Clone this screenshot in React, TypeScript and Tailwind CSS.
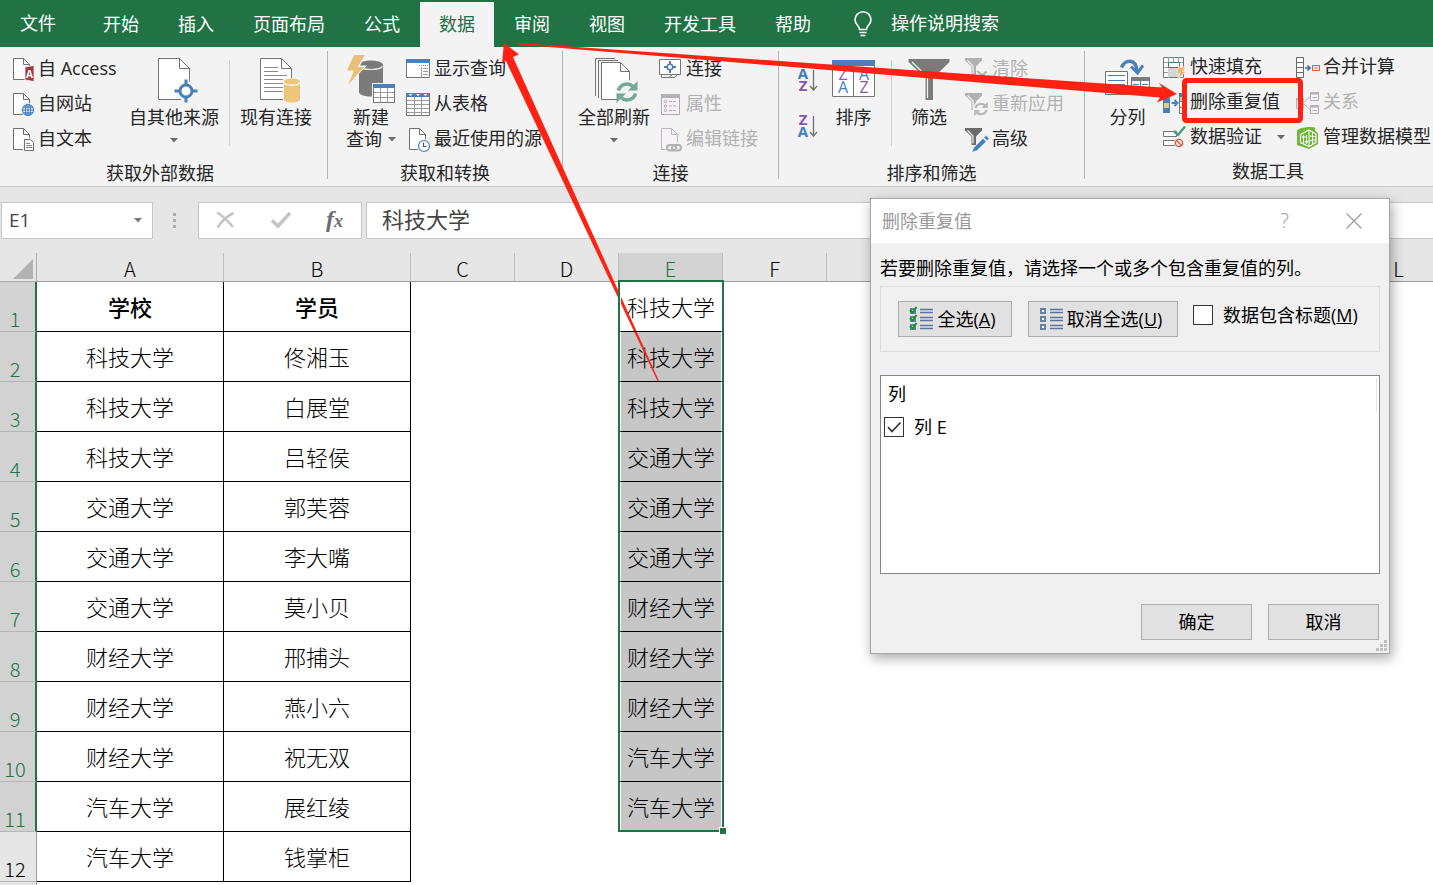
import React, { useState } from "react"
import clsx from "clsx"

const RIBBON_TABS = ["开始", "插入", "页面布局", "公式", "数据", "审阅", "视图", "开发工具", "帮助"]

// G to K sit under the dialog and stay unlabelled
const COLUMNS = ["A", "B", "C", "D", "E", "F", "", "", "", "", "", "L"]

const ROWS = [
  { school: "学校", student: "学员", unique: "科技大学" },
  { school: "科技大学", student: "佟湘玉", unique: "科技大学" },
  { school: "科技大学", student: "白展堂", unique: "科技大学" },
  { school: "科技大学", student: "吕轻侯", unique: "交通大学" },
  { school: "交通大学", student: "郭芙蓉", unique: "交通大学" },
  { school: "交通大学", student: "李大嘴", unique: "交通大学" },
  { school: "交通大学", student: "莫小贝", unique: "财经大学" },
  { school: "财经大学", student: "邢捕头", unique: "财经大学" },
  { school: "财经大学", student: "燕小六", unique: "财经大学" },
  { school: "财经大学", student: "祝无双", unique: "汽车大学" },
  { school: "汽车大学", student: "展红绫", unique: "汽车大学" },
  { school: "汽车大学", student: "钱掌柜", unique: "" },
]

/* ---------- Icons ---------- */

const Svg = ({ w = 24, h = 24, children }: { w?: number; h?: number; children: React.ReactNode }) => (
  <svg width={w} height={h} viewBox={`0 0 ${w} ${h}`} fill="none" className="shrink-0 overflow-visible" aria-hidden="true">
    {children}
  </svg>
)

const SmallPage = ({ color = "#6f6f6f", fill = "#fff" }) => (
  <>
    <path d="M1.5 .5H11.5L17.5 6.5V21.5H1.5Z" fill={fill} stroke={color} />
    <path d="M11.5 .5V6.5H17.5" stroke={color} />
  </>
)

const AccessIcon = () => (
  <Svg>
    <SmallPage />
    <path d="M13 9L22 7.500V23.500L13 22Z" fill="#a4373a" stroke="#f3f3f3" strokeWidth=".8" />
    <text x="17.500" y="19.500" fill="#fff" fontFamily="Open Sans, sans-serif" fontWeight="700" fontSize="10" textAnchor="middle">A</text>
  </Svg>
)

const WebIcon = () => (
  <Svg>
    <SmallPage />
    <circle cx="16" cy="17" r="7" fill="#f3f3f3" />
    <g stroke="#3f7ebf" strokeWidth="1.200">
      <circle cx="16" cy="17" r="5.500" fill="#fff" />
      <ellipse cx="16" cy="17" rx="2.600" ry="5.500" />
      <path d="M10.500 17H21.500M11.500 14.200H20.500M11.500 19.800H20.500M16 11.500V22.500" />
    </g>
  </Svg>
)

const TextIcon = () => (
  <Svg>
    <SmallPage />
    <rect x="11" y="10" width="12" height="14" fill="#f3f3f3" />
    <path d="M12.500 11.500H18.500L21.500 14.500V22.500H12.500Z" fill="#fff" stroke="#6f6f6f" />
    <path d="M14 15.500H18M14 17.500H20M14 19.500H20" stroke="#8a8a8a" />
  </Svg>
)

const BigPage = () => (
  <>
    <path d="M9.500 2.500H30.500L40.500 12.500V43.500H9.500Z" fill="#fff" stroke="#757575" />
    <path d="M30.500 2.500V12.500H40.500" stroke="#757575" />
  </>
)

const OtherSourceIcon = () => (
  <Svg w={50} h={50}>
    <BigPage />
    <circle cx="37" cy="35" r="10" fill="#f3f3f3" />
    <circle cx="37" cy="35" r="6" fill="#fff" stroke="#4a80b8" strokeWidth="3" />
    <path d="M37 23.500V29M37 41V46.500M25.500 35H31M43 35H48.500" stroke="#4a80b8" strokeWidth="3" />
  </Svg>
)

const ConnectionsIcon = () => (
  <Svg w={50} h={50}>
    <BigPage />
    <path d="M13 11.500H27M13 15.500H27M13 19.500H36M13 23.500H32M13 27.500H32M13 31.500H32M13 35.500H32" stroke="#8a8a8a" />
    <path d="M32 22H50V48H32Z" fill="#f3f3f3" />
    <path d="M33 25.500V43.500C33 47.500 49 47.500 49 43.500V25.500Z" fill="#ecc77b" />
    <ellipse cx="41" cy="25.500" rx="8" ry="3" fill="#ecc77b" />
    <path d="M33 26.500C35 30 47 30 49 26.500" stroke="#fff" strokeWidth="1.200" />
  </Svg>
)

const NewQueryIcon = () => (
  <Svg w={50} h={50}>
    <path d="M13 9V36C13 42 37 42 37 36V9Z" fill="#7b7b7b" />
    <ellipse cx="25" cy="9" rx="12" ry="4.500" fill="#7b7b7b" />
    <path d="M13.500 10.500C17 14.500 33 14.500 36.500 10.500" stroke="#e8e8e8" strokeWidth="1.200" />
    <path d="M7 -2H21L14 9.500H21L0 31L6.500 16H-1Z" fill="#f3f3f3" />
    <path d="M8 -1H19L11.500 11H18L2 29L8 14.500H1Z" fill="#eabf7b" />
    <path d="M26 27H50V48H26Z" fill="#f3f3f3" />
    <path d="M27.500 28.500H48.500V46.500H27.500Z" fill="#fff" stroke="#757575" />
    <path d="M27 28H49V32H27Z" fill="#4a80b8" />
    <path d="M28 36.500H48M28 41.500H48M34.500 32V46M41.500 32V46" stroke="#9b9b9b" />
  </Svg>
)

const ShowQueryIcon = () => (
  <Svg>
    <path d="M.5 1.500H23.500V19.500H.5Z" fill="#fff" stroke="#757575" />
    <path d="M0 1H24V5H0Z" fill="#4a80b8" />
    <path d="M13 7.500H22" stroke="#8a8a8a" strokeDasharray="1 1" />
    <path d="M15.500 9V19M17 10.500H22M17 13.500H22M17 16.500H22" stroke="#9b9b9b" />
  </Svg>
)

const FromTableIcon = () => (
  <Svg>
    <path d="M.5 .5H23.500V22.500H.5Z" fill="#fff" stroke="#757575" />
    <path d="M0 0H24V4H0Z" fill="#4a80b8" />
    <path d="M2.500 1H6.500L4.500 3ZM10 1H14L12 3ZM17.500 1H21.500L19.500 3Z" fill="#fff" />
    <path d="M1 7.500H23M1 11.500H23M1 15.500H23M1 19.500H23M8.500 4V22M15.500 4V22" stroke="#9b9b9b" />
  </Svg>
)

const RecentIcon = () => (
  <Svg>
    <g transform="translate(2 0)">
      <SmallPage />
    </g>
    <circle cx="18" cy="18" r="7" fill="#f3f3f3" />
    <circle cx="18" cy="18" r="5.500" fill="#fff" stroke="#4a80b8" strokeWidth="1.200" />
    <path d="M17.500 14.500V18.500H20.500" stroke="#555" strokeWidth="1.200" />
  </Svg>
)

const RefreshArrows = ({ color }: { color: string }) => (
  <g stroke={color} strokeWidth="3.500">
    <path d="M-8.500 -1.500A8.700 8.700 0 0 1 6 -5.500" />
    <path d="M8.500 1.500A8.700 8.700 0 0 1 -6 5.500" />
    <path d="M10.500 -11V-1.500H1Z" fill={color} stroke="none" />
    <path d="M-10.500 11V1.500H-1Z" fill={color} stroke="none" />
  </g>
)

const RefreshAllIcon = () => (
  <Svg w={50} h={50}>
    <path d="M6.500 40V2.500H26M9.500 42V4.500H29" stroke="#757575" />
    <path d="M12.500 6.500H31.500L40.500 15.500V43.500H12.500Z" fill="#fff" stroke="#757575" />
    <path d="M31.500 6.500V15.500H40.500" stroke="#757575" />
    <circle cx="38" cy="36" r="12" fill="#f3f3f3" />
    <g transform="translate(38 36)">
      <RefreshArrows color="#75a896" />
    </g>
  </Svg>
)

const LinkIcon = () => (
  <Svg>
    <path d="M2.500 16V19.500H10L13 17M10 19.500H16L18 17" stroke="#757575" />
    <path d="M.5 1.500H21.500V16.500H.5Z" fill="#fff" stroke="#757575" />
    <circle cx="11" cy="9" r="2.800" stroke="#4a80b8" strokeWidth="1.600" />
    <path d="M11 3V6M11 12V15M5 9H8M14 9H17" stroke="#4a80b8" strokeWidth="2" />
  </Svg>
)

const PropertiesIcon = () => (
  <Svg>
    <path d="M2.500 1.500H20.500V21.500H2.500Z" fill="#f7f2f7" stroke="#b1a8b1" />
    <path d="M2 1H21V5H2Z" fill="#b1b1b1" />
    <g stroke="#b1a8b1">
      <circle cx="6.500" cy="8.500" r="1.200" />
      <circle cx="6.500" cy="13" r="1.200" />
      <circle cx="6.500" cy="17.500" r="1.200" />
      <path d="M10 8.500H18M10 13H18M10 17.500H18" strokeDasharray="3 1" />
    </g>
  </Svg>
)

const EditLinkIcon = () => (
  <Svg>
    <g transform="translate(1 0)">
      <SmallPage color="#b8b8b8" fill="#f7f2f7" />
    </g>
    <path d="M7 14H24V24H7Z" fill="#f3f3f3" />
    <g stroke="#b1b1b1" strokeWidth="2">
      <rect x="8" y="17" width="9" height="5.500" rx="2.700" />
      <rect x="13" y="17" width="9" height="5.500" rx="2.700" />
    </g>
  </Svg>
)

const SortLettersIcon = ({ first, second }: { first: "A" | "Z"; second: "A" | "Z" }) => (
  <Svg w={20} h={24}>
    <g fontFamily="Open Sans, sans-serif" fontWeight="700" fontSize="15" textAnchor="middle">
      <text x="5" y="11" fill={first === "A" ? "#3f7ebf" : "#8c56b0"}>{first}</text>
      <text x="5" y="23" fill={second === "A" ? "#3f7ebf" : "#8c56b0"}>{second}</text>
    </g>
    <path d="M15.500 2V22M12 18L15.500 22L19 18" stroke="#6f6f6f" strokeWidth="1.300" />
  </Svg>
)

const SortIcon = () => (
  <Svg w={43} h={50}>
    <path d="M.5 4.500H42.500V40.500H.5Z" fill="#fff" stroke="#757575" />
    <path d="M0 4H43V10H0Z" fill="#4a80b8" />
    <path d="M21.500 10V40" stroke="#757575" />
    <g fontFamily="Open Sans, sans-serif" fontSize="16" fontWeight="500" textAnchor="middle">
      <text x="11" y="24" fill="#8c56b0">Z</text>
      <text x="32" y="24" fill="#3f7ebf">A</text>
      <text x="11" y="37" fill="#3f7ebf">A</text>
      <text x="32" y="37" fill="#8c56b0">Z</text>
    </g>
  </Svg>
)

const FilterIcon = () => (
  <Svg w={42} h={50}>
    <path d="M.5 3H41.500V6L25 22V44H17.500V22L.5 6Z" fill="#7b7b7b" />
    <path d="M4 6L19.500 21V42" stroke="#f3f3f3" strokeWidth="1.200" />
  </Svg>
)

const Funnel = ({ color }: { color: string }) => (
  <>
    <path d="M0 0H17V2.500L11 8.500V17H6.500V8.500L0 2.500Z" fill={color} />
    <path d="M2.500 2.500L8 8V15.500" stroke="#f3f3f3" strokeWidth="1.200" />
  </>
)

const ClearIcon = () => (
  <Svg>
    <Funnel color="#b1b1b1" />
    <path d="M12 13L22 21M21.500 13.500L13 21.500" stroke="#b1b1b1" strokeWidth="2.200" />
  </Svg>
)

const ReapplyIcon = () => (
  <Svg>
    <Funnel color="#b1b1b1" />
    <circle cx="16" cy="16" r="8" fill="#f3f3f3" />
    <g transform="translate(16 16) scale(.65)">
      <RefreshArrows color="#b8b8b8" />
    </g>
  </Svg>
)

const AdvancedIcon = () => (
  <Svg>
    <Funnel color="#6b6b6b" />
    <path d="M9 19.500L18 10.500L21 13.500L12 22.500L7 24ZM19 9.500L21 7.500L24 10.500L22 12.500Z" fill="#3f7ebf" stroke="#f3f3f3" strokeWidth=".4" />
  </Svg>
)

const SplitIcon = () => (
  <Svg w={45} h={50}>
    <path d="M.5 15.500H22.500V38.500H.5Z" fill="#fff" stroke="#757575" />
    <path d="M3 19.500H20M3 24.500H20M3 28.500H20M3 34.500H20" stroke="#4a80b8" />
    <path d="M26.500 21.500H44.500V38.500H26.500Z" fill="#fff" stroke="#757575" />
    <path d="M26 21H45V25H26Z" fill="#7b7b7b" />
    <path d="M35.500 25V38M28 28.500H34M37 28.500H43M28 33.500H34M37 33.500H43" stroke="#4a80b8" />
    <path d="M16.500 11.500C20 3 31 2 32 15" stroke="#4a80b8" strokeWidth="3.500" />
    <path d="M26 10.500L32.500 17L38 9.500" stroke="#4a80b8" strokeWidth="3" />
  </Svg>
)

const FlashFillIcon = () => (
  <Svg>
    <path d="M.5 1.500H20.500V21.500H.5Z" fill="#fff" stroke="#757575" />
    <path d="M5.500 1V22M10.500 1V6M15.500 1V6M1 6.500H20M1 11.500H20M1 16.500H14" stroke="#9b9b9b" />
    <path d="M5 12H16V21H5Z" fill="#d5d5d5" />
    <path d="M5.500 6.500H16.500V11.500H5.500Z" fill="#fff" stroke="#2f8568" />
    <path d="M16 11H23L19.500 15.500H23L14 24L17 17.500H13Z" fill="#e8b768" stroke="#f3f3f3" strokeWidth=".8" />
  </Svg>
)

const RemoveDuplicatesIcon = () => (
  <Svg>
    <path d="M0 2H7V22H0Z" fill="#4a80b8" />
    <path d="M1 12H6V17H1ZM1 3H6V7H1Z" fill="#ecc77b" />
    <path d="M8.500 12H14M11.500 9L14.500 12L11.500 15" stroke="#4a80b8" strokeWidth="2" />
    <path d="M16.500 2.500H22.500V22.500H16.500Z" fill="#fff" stroke="#757575" />
    <path d="M16 2H23V11H16Z" fill="#4a80b8" />
    <path d="M17 6H22V10H17Z" fill="#ecc77b" />
    <path d="M17 16.500H22" stroke="#757575" />
  </Svg>
)

const ValidationIcon = () => (
  <Svg>
    <path d="M.5 5.500H13.500V10.500H.5ZM.5 14.500H13.500V19.500H.5Z" fill="#fff" stroke="#757575" />
    <path d="M11 5L15 9L22 .5" stroke="#4d9b80" strokeWidth="2.500" />
    <circle cx="16" cy="17" r="5" fill="#f3f3f3" />
    <circle cx="16" cy="17" r="3.600" stroke="#d4573a" strokeWidth="1.400" />
    <path d="M13.500 14.500L18.500 19.500" stroke="#d4573a" strokeWidth="1.400" />
  </Svg>
)

const ConsolidateIcon = () => (
  <Svg>
    <path d="M.5 1.500H7.500V21.500H.5Z" fill="#fff" stroke="#6b6b6b" />
    <path d="M1 6.500H7M1 11.500H7M1 16.500H7" stroke="#6b6b6b" />
    <path d="M9 12H14M11.500 9.500L14 12L11.500 14.500" stroke="#3f6fa8" strokeWidth="1.700" />
    <path d="M16.500 9.500H23.500V14.500H16.500Z" fill="#fff" stroke="#d4573a" />
    <path d="M18 12H22" stroke="#d4573a" />
  </Svg>
)

const RelationsIcon = () => (
  <Svg>
    <g fill="#f7f2f7" stroke="#b8b0b8">
      <path d="M.5 7.500H7.500V17.500H.5ZM14.500 1.500H22.500V9.500H14.500ZM14.500 14.500H22.500V22.500H14.500Z" />
      <path d="M14 2.500H23M14 15.500H23M0 8.500H8" strokeWidth="2" />
      <path d="M8 11L14 5.500M8 13L14 18.500M16.500 6.500H21M16.500 19.500H21M2.500 13.500H6" />
    </g>
  </Svg>
)

const ModelIcon = () => (
  <Svg>
    <path d="M1 4C5 1.500 14 0 19 1.500V5L22 7V18L13 23L1 19Z" fill="#6fb536" />
    <path d="M4.500 8.500L13 4L20 8V16.500L13 20.500L4.500 16.500Z" stroke="#fff" strokeWidth="1.200" />
    <path d="M13 4V20M16.500 6V18.500M13 10L20 10.500M13 15L20 13.500" stroke="#fff" />
    <path d="M7.500 17V10M5.800 12L7.500 9.500L9.200 12M10.500 9V17M9 15L10.500 17.500L12 15" stroke="#fff" />
  </Svg>
)

const Caret = ({ className = "text-[#6b6b6b]" }) => (
  <svg width="8" height="5" viewBox="0 0 8 5" className={clsx("shrink-0", className)} aria-hidden="true">
    <path d="M0 0H8L4 4.500Z" fill="currentColor" />
  </svg>
)

const SelectListIcon = ({ checked }: { checked?: boolean }) => (
  <Svg w={24} h={24}>
    {[2, 10, 18].map((y) => (
      <g key={y}>
        <rect x="1" y={y} width="4" height="4" fill="#fff" stroke="#6b80a8" strokeWidth="2" />
        <path d={`M10 ${y + 0.5}H23M10 ${y + 3.5}H23`} stroke="#5f7396" strokeWidth="1.300" />
        {checked && <path d={`M0 ${y + 1}L2.500 ${y + 3.5}L6.500 ${y - 2}`} stroke="#0d9420" strokeWidth="2" />}
      </g>
    ))}
  </Svg>
)

/* ---------- Ribbon ---------- */

interface SmallButtonProps {
  icon: React.ReactNode
  label: string
  disabled?: boolean
  caret?: boolean
  className?: string
}

const SmallButton = ({ icon, label, disabled, caret, className = "gap-[3px]" }: SmallButtonProps) => (
  <button type="button" disabled={disabled} className={clsx("flex h-[35px] items-center whitespace-nowrap disabled:text-[#b1b1b1]", className)}>
    {icon}
    <span className="pb-[2px]">{label}</span>
    {caret && <span className="ml-3"><Caret /></span>}
  </button>
)

interface BigButtonProps {
  icon: React.ReactNode
  label: string
  caret?: boolean
}

const BigButton = ({ icon, label, caret }: BigButtonProps) => (
  <button type="button" className="flex shrink-0 flex-col items-center whitespace-nowrap pt-1 leading-[22px]">
    {icon}
    <span>{label}</span>
    {caret && <span className="flex h-6 items-center"><Caret /></span>}
  </button>
)

const InnerLine = ({ className }: { className?: string }) => (
  <div className={clsx("mt-2 h-[86px] w-px shrink-0 bg-[#d0d0d0]", className)} />
)

const GroupLine = ({ className }: { className?: string }) => (
  <div className={clsx("mt-1 h-32 w-px shrink-0 bg-[#b5b5b5]", className)} />
)

const Group = ({ title, className, children }: { title: string; className: string; children: React.ReactNode }) => (
  <section className="flex shrink-0 flex-col pt-[5px]">
    <div className={clsx("flex h-[105px] items-start", className)}>{children}</div>
    <h2 className="text-center leading-8">{title}</h2>
  </section>
)

const Ribbon = () => (
  <div className="flex h-[140px] shrink-0 overflow-hidden border-b border-[#c8c8c8] bg-[#f3f3f3] text-[18px] text-[#262626]">
    <Group title="获取外部数据" className="pl-3 pr-2">
      <div className="w-[117px]">
        <SmallButton icon={<AccessIcon />} label="自 Access" className="gap-[2px]" />
        <SmallButton icon={<WebIcon />} label="自网站" className="gap-[2px]" />
        <SmallButton icon={<TextIcon />} label="自文本" className="gap-[2px]" />
      </div>
      <BigButton icon={<OtherSourceIcon />} label="自其他来源" caret />
      <InnerLine className="mx-[10px]" />
      <BigButton icon={<ConnectionsIcon />} label="现有连接" />
    </Group>
    <GroupLine className="ml-[7px]" />

    <Group title="获取和转换" className="gap-[10px] pl-[18px] pr-5">
      <button type="button" className="flex flex-col items-center pt-1 leading-[22px]">
        <NewQueryIcon />
        <span>新建</span>
        <span className="flex items-center gap-[6px]">
          查询
          <Caret />
        </span>
      </button>
      <div>
        <SmallButton icon={<ShowQueryIcon />} label="显示查询" className="gap-1" />
        <SmallButton icon={<FromTableIcon />} label="从表格" className="gap-1" />
        <SmallButton icon={<RecentIcon />} label="最近使用的源" className="gap-1" />
      </div>
    </Group>
    <GroupLine />

    <Group title="连接" className="gap-[9px] pl-[15px] pr-5">
      <BigButton icon={<RefreshAllIcon />} label="全部刷新" caret />
      <div>
        <SmallButton icon={<LinkIcon />} label="连接" />
        <SmallButton icon={<PropertiesIcon />} label="属性" disabled />
        <SmallButton icon={<EditLinkIcon />} label="编辑链接" disabled />
      </div>
    </Group>
    <GroupLine />

    <Group title="排序和筛选" className="pl-[19px] pr-5">
      <div className="flex flex-col gap-[22px] pt-4">
        <button type="button" aria-label="升序">
          <SortLettersIcon first="A" second="Z" />
        </button>
        <button type="button" aria-label="降序">
          <SortLettersIcon first="Z" second="A" />
        </button>
      </div>
      <div className="w-[14px]" />
      <BigButton icon={<SortIcon />} label="排序" />
      <InnerLine className="mx-4" />
      <BigButton icon={<FilterIcon />} label="筛选" />
      <div className="w-[15px]" />
      <div>
        <SmallButton icon={<ClearIcon />} label="清除" disabled />
        <SmallButton icon={<ReapplyIcon />} label="重新应用" disabled />
        <SmallButton icon={<AdvancedIcon />} label="高级" />
      </div>
    </Group>
    <GroupLine />

    <Group title="数据工具" className="gap-3 pl-5 pr-5">
      <BigButton icon={<SplitIcon />} label="分列" />
      <div className="-mt-[2px] ml-px w-[121px]">
        <SmallButton icon={<FlashFillIcon />} label="快速填充" />
        <SmallButton icon={<RemoveDuplicatesIcon />} label="删除重复值" />
        <SmallButton icon={<ValidationIcon />} label="数据验证" caret />
      </div>
      <div className="-mt-[2px]">
        <SmallButton icon={<ConsolidateIcon />} label="合并计算" />
        <SmallButton icon={<RelationsIcon />} label="关系" disabled />
        <SmallButton icon={<ModelIcon />} label="管理数据模型" />
      </div>
    </Group>
  </div>
)

const TabBar = () => (
  <nav className="flex h-[47px] shrink-0 items-stretch overflow-hidden bg-[#217346] text-[18px] text-white">
    <button type="button" className="mr-2 w-[76px] shrink-0">文件</button>
    <div className="flex gap-px pt-[2px]">
      {RIBBON_TABS.map((tab) => (
        <button
          key={tab}
          type="button"
          className={clsx("shrink-0 whitespace-nowrap px-[19px] pb-px", tab === "数据" && "bg-[#f3f3f3] text-[#217346]")}
        >
          {tab}
        </button>
      ))}
    </div>
    <button type="button" className="ml-6 flex shrink-0 items-center gap-[19px] whitespace-nowrap">
      <svg width="18" height="26" viewBox="0 0 18 26" fill="none" stroke="#fff" strokeWidth="1.600" aria-hidden="true">
        <path d="M5.500 18.500C5.500 14.500 1 13.500 1 8.800A8 8 0 0 1 17 8.800C17 13.500 12.500 14.500 12.500 18.500ZM5.500 21.500H12.500M6.500 24.500H11.500" />
      </svg>
      操作说明搜索
    </button>
  </nav>
)

/* ---------- Formula bar ---------- */

const FormulaBar = () => (
  <div className="flex h-[66px] shrink-0 items-center bg-[#e6e6e6] pl-px text-[#444]">
    <div className="flex h-[37px] w-[152px] shrink-0 items-center border border-[#c6c6c6] bg-white pr-[10px]">
      <input aria-label="名称框" defaultValue="E1" className="w-full min-w-0 bg-transparent pl-[7px] text-[19px] outline-none" />
      <button type="button" aria-label="展开名称框">
        <Caret className="text-[#777]" />
      </button>
    </div>
    <div className="ml-[19px] mr-[21px] flex w-[5px] flex-col items-center gap-[3px]">
      <i className="size-[3px] bg-[#ababab]" />
      <i className="size-[3px] bg-[#ababab]" />
      <i className="size-[3px] bg-[#ababab]" />
    </div>
    <div className="flex h-[37px] w-[164px] shrink-0 items-center justify-between border border-[#c6c6c6] bg-white pl-[17px] pr-[18px]">
      <button type="button" aria-label="取消输入">
        <svg width="19" height="18" viewBox="0 0 19 18" stroke="#c4c4c4" strokeWidth="2.500" fill="none">
          <path d="M1 1.500C7 5 12 10 17 16M17.500 2C11 5 6 10 1.500 16.500" />
        </svg>
      </button>
      <button type="button" aria-label="输入">
        <svg width="20" height="18" viewBox="0 0 20 18" stroke="#c4c4c4" strokeWidth="3.500" fill="none">
          <path d="M1 9.500L7 15L19 2" />
        </svg>
      </button>
      <button type="button" className="font-['Liberation_Serif',serif] text-[24px] font-bold italic leading-6 text-[#6b6b6b]">
        f<span className="text-[18px]">x</span>
      </button>
    </div>
    <input
      aria-label="编辑栏"
      defaultValue="科技大学"
      className="ml-1 h-[37px] min-w-0 flex-1 border border-r-0 border-[#c6c6c6] bg-white pb-1 pl-[15px] text-[22px] outline-none"
    />
  </div>
)

/* ---------- Sheet ---------- */

const Sheet = () => (
  <div className="min-h-0 flex-1 overflow-hidden bg-white font-['Noto_Sans_CJK_SC',sans-serif]">
    <table className="w-[1451px] table-fixed border-separate border-spacing-0 font-light text-black">
      <colgroup>
        <col className="w-[37px]" />
        <col className="w-[187px]" />
        <col className="w-[187px]" />
        {COLUMNS.slice(2).map((_, i) => (
          <col key={i} className="w-[104px]" />
        ))}
      </colgroup>
      <thead>
        <tr className="h-[29px] bg-[#e6e6e6] text-[20px] leading-6">
          <th className="border-b border-r border-[#ababab] p-0">
            <svg width="20" height="20" viewBox="0 0 20 20" className="ml-[13px] mt-1" aria-hidden="true">
              <path d="M20 0V20H0Z" fill="#b2b2b2" />
            </svg>
          </th>
          {COLUMNS.map((c, i) => (
            <th
              key={i}
              scope="col"
              className={clsx(
                "border-b border-r border-b-[#9b9b9b] border-r-[#bdbdbd] p-0 pt-1 font-light",
                c === "E" && "bg-[#d2d2d2] text-[#217346]",
              )}
            >
              {c}
            </th>
          ))}
        </tr>
      </thead>
      <tbody className="text-[22px]">
        {ROWS.map((row, i) => {
          const selected = i < 11
          const cell = clsx("border-b border-r border-black p-0 text-center", i === 0 && "font-medium")

          return (
            <tr key={i} className="h-[50px]">
              <th
                scope="row"
                className={clsx(
                  "border-b border-b-[#b5b5b5] p-0 text-center align-bottom text-[20px] font-light leading-6",
                  selected ? "border-r-2 border-r-[#217346] bg-[#d2d2d2] pr-[5px] text-[#217346]" : "border-r border-r-[#9b9b9b] bg-[#e6e6e6] pr-[6px]",
                )}
              >
                {i + 1}
              </th>
              <td className={cell}>{row.school}</td>
              <td className={cell}>{row.student}</td>
              <td />
              <td />
              <td
                className={clsx(
                  "p-0 text-center",
                  i === 0 && "relative z-10",
                  selected && "border-x-2 border-b border-x-white border-b-black",
                  selected && i > 0 && "bg-[#c6c6c6] bg-clip-padding",
                )}
              >
                {row.unique}
                {i === 0 && (
                  <div className="pointer-events-none absolute -left-[3px] -top-[2px] h-[552px] w-[106px] border-2 border-[#217346]">
                    <div className="absolute -bottom-1 -right-1 size-[7px] border-l border-t border-white bg-[#217346]" />
                  </div>
                )}
              </td>
            </tr>
          )
        })}
        <tr className="h-[50px]">
          <th className="border-r border-[#9b9b9b] bg-[#e6e6e6]" />
        </tr>
      </tbody>
    </table>
  </div>
)

/* ---------- Dialog ---------- */

interface CheckProps {
  id: string
  label: React.ReactNode
  checked: boolean
  onChange: (value: boolean) => void
}

const Check = ({ id, label, checked, onChange }: CheckProps) => (
  <div className="flex items-center gap-[10px]">
    <span className="relative size-5 shrink-0">
      <input
        id={id}
        type="checkbox"
        checked={checked}
        onChange={(e) => onChange(e.target.checked)}
        className="block size-5 appearance-none border border-[#333] bg-white"
      />
      {checked && (
        <svg viewBox="0 0 20 20" className="pointer-events-none absolute inset-0" fill="none" stroke="#333" strokeWidth="1.800" aria-hidden="true">
          <path d="M4 10L8 14.500L16.500 5.500" />
        </svg>
      )}
    </span>
    <label htmlFor={id} className="whitespace-nowrap">{label}</label>
  </div>
)

const dialogButton = "flex h-9 items-center justify-center border border-[#adadad] bg-[#e1e1e1]"

const RemoveDuplicatesDialog = () => {
  const [hasHeader, setHasHeader] = useState(false)
  const [columnE, setColumnE] = useState(true)

  return (
    <div
      role="dialog"
      aria-labelledby="dialog-title"
      className="absolute left-[870px] top-[198px] w-[520px] border border-[#a5a5a5] bg-[#f0f0f0] text-[18px] leading-6 text-black shadow-[2px_4px_12px_rgba(0,0,0,0.35)]"
    >
      <header className="flex h-11 items-center bg-white pl-[11px] pr-[27px] text-[#999]">
        <h2 id="dialog-title" className="flex-1 pb-px">删除重复值</h2>
        <button type="button" aria-label="帮助" className="mr-[57px] text-[20px] font-light">?</button>
        <button type="button" aria-label="关闭">
          <svg width="16" height="16" viewBox="0 0 16 16" stroke="#999" strokeWidth="1.200" className="block">
            <path d="M.5 .5L15.500 15.500M15.500 .5L.5 15.500" />
          </svg>
        </button>
      </header>

      <div className="px-[9px] pb-[13px] pt-[13px]">
        <p className="whitespace-nowrap">若要删除重复值，请选择一个或多个包含重复值的列。</p>

        <div className="mt-[6px] flex h-[66px] items-start border border-[#dcdcdc] pl-[17px] pt-[14px]">
          <button type="button" className={clsx(dialogButton, "w-[114px] gap-[3px] pr-1")}>
            <SelectListIcon checked />
            <span>全选(<u>A</u>)</span>
          </button>
          <button type="button" className={clsx(dialogButton, "ml-4 w-[150px] gap-[3px] pr-1")}>
            <SelectListIcon />
            <span>取消全选(<u>U</u>)</span>
          </button>
          <div className="ml-[15px] mt-[2px]">
            <Check id="has-header" label={<>数据包含标题(<u>M</u>)</>} checked={hasHeader} onChange={setHasHeader} />
          </div>
        </div>

        <div className="mt-[23px] h-[199px] border border-[#828790] bg-white">
          <div className="mr-[2px] mt-[2px] h-[34px] border-r border-[#e5e5e5] pl-[7px] pt-1">列</div>
          <div className="pl-[3px] pt-[3px]">
            <Check id="column-e" label="列 E" checked={columnE} onChange={setColumnE} />
          </div>
        </div>

        <div className="mt-[30px] flex justify-end gap-4 pr-px">
          <button type="button" className={clsx(dialogButton, "w-[111px]")}>确定</button>
          <button type="button" className={clsx(dialogButton, "w-[111px]")}>取消</button>
        </div>
      </div>

      <svg width="11" height="11" viewBox="0 0 11 11" fill="#bfbfbf" className="absolute bottom-[2px] right-[2px]" aria-hidden="true">
        <path d="M8 0H11V3H8ZM4 4H7V7H4ZM8 4H11V7H8ZM0 8H3V11H0ZM4 8H7V11H4ZM8 8H11V11H8Z" />
      </svg>
    </div>
  )
}

// Red arrows: selected column -> 数据 tab -> 删除重复值
const Annotations = () => (
  <svg width="1433" height="400" viewBox="0 0 1433 400" className="pointer-events-none absolute left-0 top-0" aria-hidden="true">
    <g fill="#ff2112">
      <path d="M504 43L519 54.500L513 57L659 381L657.500 381L506 61L502 63Z" />
      <path d="M519 43L1162 87.500L1159 83L1177 94L1157 102.500L1160 97.500L519 44.500Z" />
    </g>
    <rect x="1184.500" y="80.500" width="116" height="40" rx="2" fill="none" stroke="#ff2112" strokeWidth="5" />
  </svg>
)

export default function App() {
  return (
    <div className="relative flex h-screen flex-col overflow-hidden bg-white font-['Open_Sans','Noto_Sans_CJK_SC',sans-serif]">
      <TabBar />
      <Ribbon />
      <FormulaBar />
      <Sheet />
      <RemoveDuplicatesDialog />
      <Annotations />
    </div>
  )
}
